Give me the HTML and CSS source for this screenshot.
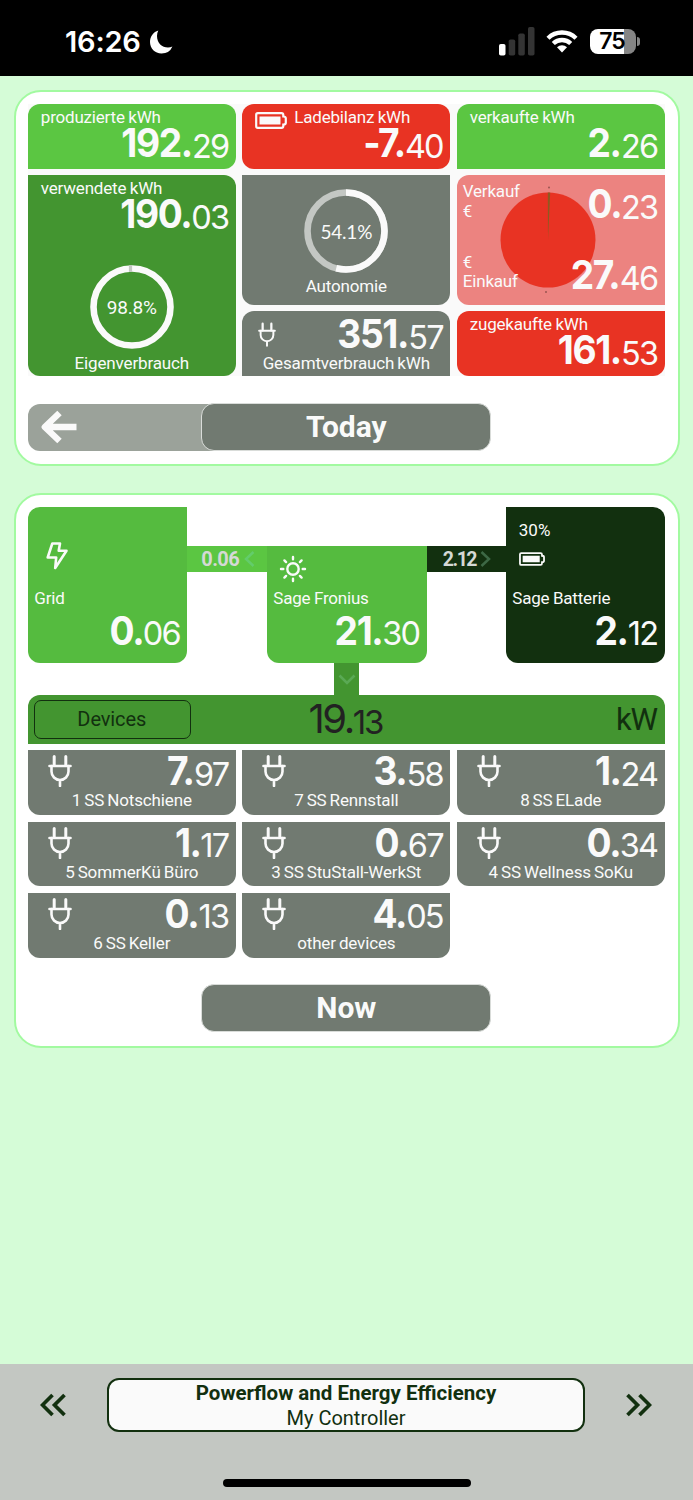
FILE: index.html
```html
<!DOCTYPE html>
<html lang="de">
<head>
<meta charset="utf-8">
<title>Powerflow and Energy Efficiency</title>
<link rel="stylesheet" href="styles.css">
</head>
<body>
<svg class="defs" width="0" height="0">
  <symbol id="plug" viewBox="0 0 24 32"><path d="M6.2 1.5v9M17.8 1.5v9" stroke-width="3"/><path d="M1.5 11h21" stroke-width="2.6"/><path d="M3.5 11v5.5a8.5 8.5 0 0 0 17 0V11M12 25v6" stroke-width="2.6"/></symbol>
  <symbol id="battery" viewBox="0 0 32 17"><path d="M2.8 1.200h23.700q1.800 0 1.800 1.800v1.500q2.500 0 2.500 1.800v4.400q0 1.800-2.500 1.800v1.500q0 1.800-1.800 1.800H2.800Q1.200 15.800 1.200 14.200V2.800Q1.200 1.200 2.800 1.200Z" stroke-width="2.200"/><path d="M4.500 4.500h21v8h-21Z" fill="currentColor" stroke="none"/></symbol>
</svg>
<header class="status">
  <div class="clock"><span>16:26</span>
    <svg width="24" height="24" viewBox="0 0 24 24"><path d="M9.300.6A12 12 0 0 0 8 6C8 13 13 17.500 19 17.500q2.500 0 4.400-1Q20.500 23.500 12.500 23.500C6 23.500 1 18.500 1 12 1 6.500 4.500 2 9.300.6Z" fill="#fff"/></svg>
  </div>
  <div class="radio">
    <svg width="36" height="30" viewBox="0 0 36 30"><rect y="18" width="6.500" height="11.500" rx="1.800" fill="#fff"/><g fill="#343434"><rect x="9.700" y="13.500" width="6.500" height="16" rx="1.800"/><rect x="19.300" y="7.500" width="6.500" height="22" rx="1.800"/><rect x="29" y="1" width="6.500" height="28.500" rx="1.800"/></g></svg>
    <svg width="32" height="24" viewBox="0 0 32 24"><g fill="none" stroke="#fff" stroke-width="4.400"><path d="M2 9.200a20 20 0 0 1 28 0"/><path d="M7.300 14.500a12.500 12.500 0 0 1 17.400 0"/></g><path d="M11 18.200a7.500 7.500 0 0 1 10 0L16 23.500Z" fill="#fff"/></svg>
    <div class="charge"><span>75</span></div><i class="charge-tip"></i>
  </div>
</header>

<main class="screen">
  <section class="card">
    <div class="summary">
      <article class="tile lime c-tl c-tr c-br"><h3>produzierte kWh</h3><p class="value"><b>192.</b><span>29</span></p></article>
      <article class="tile red c-tl c-tr c-bl c-br"><h3 class="with-battery"><svg class="icon" width="32" height="17"><use href="#battery"/></svg>Ladebilanz kWh</h3><p class="value"><b>-7.</b><span>40</span></p></article>
      <article class="tile lime c-tl c-tr"><h3>verkaufte kWh</h3><p class="value"><b>2.</b><span>26</span></p></article>

      <article class="tile green tall c-tr c-bl c-br"><h3>verwendete kWh</h3><p class="value"><b>190.</b><span>03</span></p>
        <div class="gauge own"><svg width="84" height="84" viewBox="0 0 84 84"><circle cx="42" cy="42" r="38.500" fill="none" stroke="#fafafa" stroke-width="6.600"/><path d="M40.500 3.500v6.700" transform="translate(0 -3.300)" stroke="#c3c8c2" stroke-width="3.200"/></svg><span>98.8%</span></div>
        <h4>Eigenverbrauch</h4></article>
      <article class="tile grey c-bl c-br">
        <div class="gauge autonomy"><svg width="84" height="84" viewBox="0 0 84 84"><circle cx="42" cy="42" r="38.500" fill="none" stroke="#c3c7c3" stroke-width="6.600"/><circle cx="42" cy="42" r="38.500" fill="none" stroke="#fafafa" stroke-width="6.600" pathLength="100" stroke-dasharray="54.100 100" transform="rotate(-90 42 42)"/></svg><span>54.1%</span></div>
        <h4>Autonomie</h4></article>
      <article class="tile pink c-tl c-bl">
        <svg class="pie" width="96" height="112" viewBox="0 0 96 112"><circle cx="48" cy="56" r="47.500" fill="#e83323"/><path d="M48 56 47.800 8.500h2.400Z" fill="#8f5a20"/><circle cx="49" cy="3.500" r="1" fill="#9b5551"/><circle cx="46" cy="108" r="1" fill="#9b5551"/></svg>
        <div class="trade"><p class="trade-label">Verkauf<br>€</p><p class="value"><b>0.</b><span>23</span></p></div>
        <div class="trade"><p class="trade-label">€<br>Einkauf</p><p class="value"><b>27.</b><span>46</span></p></div>
      </article>
      <article class="tile grey total c-tl c-tr"><div class="row"><svg class="icon" width="18" height="25"><use href="#plug"/></svg><p class="value"><b>351.</b><span>57</span></p></div><h4>Gesamtverbrauch kWh</h4></article>
      <article class="tile red c-tl c-bl c-br"><h3>zugekaufte kWh</h3><p class="value"><b>161.</b><span>53</span></p></article>
    </div>
    <div class="period">
      <div class="back"><svg width="37" height="36" viewBox="0 0 37 36"><path d="M35.500 18H4M18.500 4 3.800 18l14.700 14" fill="none" stroke="#fafafa" stroke-width="6.400" stroke-linejoin="round"/></svg></div>
      <div class="button">Today</div>
    </div>
  </section>

  <section class="card power">
    <div class="flow">
      <article class="node c-tl c-bl c-br"><svg class="icon bolt" width="22" height="28" viewBox="0 0 22 28"><path d="M6.300 1.500h7.700l-1.300 7.300h7.800L9.200 26l1-10.500H1.700Z" stroke-width="2.600" stroke-linejoin="round"/></svg><h3>Grid</h3><p class="value"><b>0.</b><span>06</span></p></article>
      <div class="link lime"><span>0.06</span><svg width="11" height="18" viewBox="0 0 11 18"><path d="M9.500 2 2 9l7.500 7" fill="none" stroke="#63cc6b" stroke-width="2.500"/></svg></div>
      <article class="node middle c-bl c-br"><svg class="icon sun" width="28" height="28" viewBox="0 0 28 28"><circle cx="14" cy="14" r="5.700" stroke-width="2.400"/><path d="M14 2v2.300M14 23.700V26M2 14h2.300M23.700 14H26M5.400 5.400l1.700 1.700M20.900 20.900l1.700 1.700M5.400 22.600l1.700-1.700M20.900 7.100l1.700-1.700" stroke-width="2.400"/></svg><h3>Sage Fronius</h3><p class="value"><b>21.</b><span>30</span></p></article>
      <div class="link dark"><span>2.12</span><svg width="11" height="18" viewBox="0 0 11 18"><path d="M1.500 2 9 9l-7.500 7" fill="none" stroke="#3d6845" stroke-width="2.500"/></svg></div>
      <article class="node dark c-tr c-bl c-br"><p class="charge-level">30%</p><svg class="icon cell" width="26" height="14" viewBox="0 0 32 17"><use href="#battery" width="32" height="17"/></svg><h3>Sage Batterie</h3><p class="value"><b>2.</b><span>12</span></p></article>
    </div>
    <div class="trunk"><svg width="18" height="11" viewBox="0 0 18 11"><path d="m1.500 1.500 7.500 7.500 7.500-7.500" fill="none" stroke="#5aa954" stroke-width="2.600"/></svg></div>
    <div class="bar"><div class="devices-button">Devices</div><p class="sum"><span class="whole">19.</span><span>13</span></p><span class="unit">kW</span></div>
    <div class="devices">
      <article class="tile grey c-bl c-br"><div class="row"><svg class="icon" width="24" height="32"><use href="#plug"/></svg><p class="value"><b>7.</b><span>97</span></p></div><h4>1 SS Notschiene</h4></article>
      <article class="tile grey c-bl c-br"><div class="row"><svg class="icon" width="24" height="32"><use href="#plug"/></svg><p class="value"><b>3.</b><span>58</span></p></div><h4>7 SS Rennstall</h4></article>
      <article class="tile grey c-bl c-br"><div class="row"><svg class="icon" width="24" height="32"><use href="#plug"/></svg><p class="value"><b>1.</b><span>24</span></p></div><h4>8 SS ELade</h4></article>
      <article class="tile grey c-bl c-br"><div class="row"><svg class="icon" width="24" height="32"><use href="#plug"/></svg><p class="value"><b>1.</b><span>17</span></p></div><h4>5 SommerKü Büro</h4></article>
      <article class="tile grey c-bl c-br"><div class="row"><svg class="icon" width="24" height="32"><use href="#plug"/></svg><p class="value"><b>0.</b><span>67</span></p></div><h4>3 SS StuStall-WerkSt</h4></article>
      <article class="tile grey c-bl c-br"><div class="row"><svg class="icon" width="24" height="32"><use href="#plug"/></svg><p class="value"><b>0.</b><span>34</span></p></div><h4>4 SS Wellness SoKu</h4></article>
      <article class="tile grey c-bl c-br"><div class="row"><svg class="icon" width="24" height="32"><use href="#plug"/></svg><p class="value"><b>0.</b><span>13</span></p></div><h4>6 SS Keller</h4></article>
      <article class="tile grey c-bl c-br"><div class="row"><svg class="icon" width="24" height="32"><use href="#plug"/></svg><p class="value"><b>4.</b><span>05</span></p></div><h4>other devices</h4></article>
    </div>
    <div class="period now"><div class="button">Now</div></div>
  </section>
</main>

<footer class="footer">
  <nav class="pager">
    <svg width="26" height="24" viewBox="0 0 26 24"><path d="M12.500 2 2.500 12l10 10M24.500 2l-10 10 10 10" fill="none" stroke="#12300f" stroke-width="3.700"/></svg>
    <div class="page"><strong>Powerflow and Energy Efficiency</strong><span>My Controller</span></div>
    <svg width="26" height="24" viewBox="0 0 26 24"><path d="m1.500 2 10 10-10 10M13.500 2l10 10-10 10" fill="none" stroke="#12300f" stroke-width="3.700"/></svg>
  </nav>
  <div class="home"></div>
</footer>
</body>
</html>
```
FILE: styles.css
```css
* { box-sizing: border-box; }
body { margin: 0; width: 693px; height: 1500px; overflow: hidden; display: flex; flex-direction: column; background: #d5fcd7; font-family: Roboto, "Liberation Sans", sans-serif; color: #fafafa; }
h3, h4, p { margin: 0; font-weight: 400; }
svg { display: block; flex: none; }
.defs { display: none; }
.icon { fill: none; stroke: currentColor; stroke-linecap: round; }

.status { height: 76px; flex: none; background: #000; display: flex; justify-content: space-between; padding: 0 53px 0 65px; color: #fff; font-family: Inter, sans-serif; }
.clock { display: flex; align-items: center; gap: 8px; padding-top: 7px; font-size: 29px; font-weight: 600; letter-spacing: -.2px; }
.radio { display: flex; align-items: center; padding-top: 6px; }
.radio svg:first-child { margin-right: 11px; margin-top: -1px; }
.radio svg:nth-child(2) { margin-right: 12px; }
.charge { width: 46px; height: 25px; padding-right: 2px; border-radius: 8px; background: linear-gradient(90deg, #fff 75%, #858585 75%); display: flex; align-items: center; justify-content: center; color: #000; font-size: 23px; font-weight: 600; letter-spacing: -1px; }
.charge-tip { width: 3px; height: 9px; margin-left: 1px; border-radius: 0 4px 4px 0; background: #858585; }

.screen { flex: 1; display: flex; flex-direction: column; gap: 27px; padding: 14px 13.500px 0; }
.card { width: 666px; height: 376px; padding: 12.300px; border: 2px solid #a2faa0; border-radius: 27px; background: #fff; }
.card.power { height: 555px; }

.summary { display: grid; grid-template-columns: repeat(3, 208px); grid-template-rows: 64.500px 129.500px 65px; gap: 6.500px; width: 637px; background: #fafafa; }
.tile { position: relative; display: flex; flex-direction: column; }
.tall { grid-row: span 2; }
.lime { background: #5bc642; }
.green { background: #439530; }
.red { background: #e83323; }
.pink { background: #ec8380; }
.grey { background: #717a71; }
.c-tl { border-top-left-radius: 12px; }
.c-tr { border-top-right-radius: 12px; }
.c-bl { border-bottom-left-radius: 12px; }
.c-br { border-bottom-right-radius: 12px; }
h3 { height: 26px; padding-left: 13px; font-size: 17px; letter-spacing: -.2px; word-spacing: -.5px; line-height: 26px; white-space: nowrap; }
h4 { height: 20px; font-size: 17px; letter-spacing: -.15px; word-spacing: -1px; line-height: 20px; text-align: center; white-space: nowrap; }
.with-battery { display: flex; gap: 7px; }
.with-battery .icon { margin-top: 7.500px; }

.value { display: flex; justify-content: flex-end; height: 40px; padding-right: 7.500px; font-family: Inter, sans-serif; line-height: 40px; white-space: nowrap; }
.value b { padding-top: 1px; font-size: 40px; font-weight: 750; letter-spacing: -1.500px; transform: scaleX(.93); transform-origin: right; }
.value span { font-size: 32.500px; font-weight: 400; letter-spacing: -1.800px; padding-top: 4.500px; }
h3 + .value { margin-top: -8px; }
.row { display: flex; justify-content: space-between; height: 40px; padding-left: 20px; }
.devices .row .icon { margin-top: 5px; }
.total { padding-top: 2px; }
.total .row { padding-left: 16px; }
.total .icon { margin-top: 9px; }

.gauge { position: relative; display: grid; place-items: center; width: 84px; height: 84px; margin: 0 auto; font-size: 19px; letter-spacing: -.2px; }
.gauge > * { grid-area: 1 / 1; }
.own { margin-top: 32px; }
.own + h4 { margin-top: 4px; }
.autonomy { margin-top: 14px; font-family: Lato, sans-serif; }
.autonomy + h4 { margin-top: 3px; }
.pie { position: absolute; left: 43px; top: 9px; }
.trade { position: relative; display: flex; justify-content: space-between; height: 70.500px; padding: 7px 0 0 6px; }
.trade-label { font-size: 17px; letter-spacing: -.2px; line-height: 19.500px; }
.trade .value { margin-top: 1px; }
.trade + .trade { height: 59px; padding-top: 7px; }
.trade + .trade .value { margin-top: 1.500px; }

.period { position: relative; display: flex; justify-content: center; width: 637px; height: 48px; margin-top: 26.500px; }
.button { width: 290px; height: 48px; border: 1px solid #d9dcd9; border-radius: 13px; background: #717a71; font-size: 30px; font-weight: 700; line-height: 46px; text-align: center; position: relative; }
.back { position: absolute; left: 0; top: 1px; width: 200px; height: 47px; padding: 5px 0 0 13px; border-radius: 12px 0 0 12px; background: #9ba29a; }

.flow { display: grid; grid-template-columns: 159.500px 79.500px 160px 79px 159px; grid-template-rows: 155.500px; height: 155.500px; }
.node { display: flex; flex-direction: column; background: #55bb3f; position: relative; }
.dark { background: #12300f; }
.middle { margin-top: 39px; }
.node h3 { padding-left: 6.500px; margin-top: auto; }
.node .value { flex: none; margin: -1px 0 0; height: 53px; }
.bolt { margin: 35px 0 0 18px; }
.sun { margin: 9px 0 0 12px; }
.charge-level { padding: 12px 0 0 13px; font-size: 17px; line-height: 22px; }
.cell { margin: 11px 0 0 13px; }
.link { height: 26px; margin-top: 39px; display: flex; align-items: center; gap: 5px; padding-left: 14px; color: #d5d9d5; font-size: 20px; font-weight: 700; letter-spacing: -.6px; }
.link.dark { padding-left: 16px; gap: 3px; font-size: 19.500px; letter-spacing: -1.500px; }
.link.dark svg { margin-left: 1px; }
.trunk { width: 25.500px; height: 32.500px; margin-left: 306px; padding: 11px 0 0 4px; background: #439530; }
.bar { display: grid; grid-template-columns: 1fr auto 1fr; width: 637px; height: 48.500px; padding: 5px 8px 0 6.500px; border-radius: 12px 12px 0 0; background: #439530; color: #12300f; }
.devices-button { width: 157px; height: 39px; padding-right: 2px; border: 1.800px solid #12300f; border-radius: 7px; font-size: 20px; letter-spacing: -.1px; line-height: 36px; text-align: center; }
.sum { display: flex; line-height: 40px; height: 40px; color: #222; font-family: Inter, sans-serif; font-size: 33px; letter-spacing: -2px; }
.sum .whole { font-size: 40px; letter-spacing: -2.500px; margin-top: -1px; }
.sum span:last-child { padding-top: 2px; }
.unit { justify-self: end; font-size: 31px; font-weight: 400; letter-spacing: -1.200px; line-height: 40px; }
.devices { display: grid; grid-template-columns: repeat(3, 208px); grid-auto-rows: 64.800px; gap: 6.500px; margin-top: 6.500px; }

.footer { height: 136.500px; flex: none; padding-top: 14px; background: #c3c7c2; }
.pager { display: flex; align-items: center; justify-content: space-between; padding: 0 41px 0 40px; }
.page { width: 478px; height: 54px; border: 2px solid #12300f; border-radius: 12px; background: #fafafa; color: #12300f; text-align: center; font-size: 20px; line-height: 25px; }
.page > * { display: block; }
.page strong { height: 26px; font-size: 20.500px; line-height: 26px; }
.home { width: 248px; height: 8px; margin: 47px auto 0; border-radius: 4px; background: #000; }
```
